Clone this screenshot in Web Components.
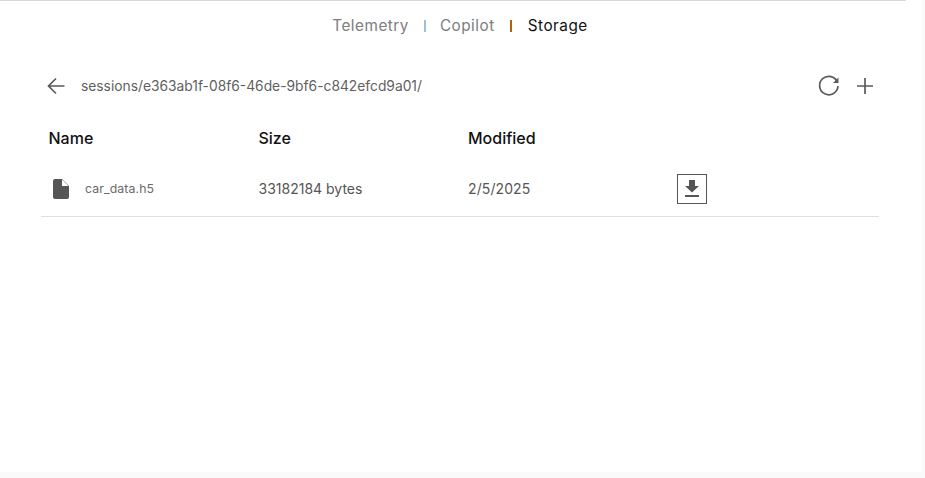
<!DOCTYPE html>
<html>
<head>
<meta charset="utf-8">
<style>
  html, body { margin: 0; height: 100%; background: #fafafa; overflow: hidden; }
  body { font-family: Inter, "Noto Sans", sans-serif; }
</style>
</head>
<body>
<storage-page></storage-page>
<script>
class TabNav extends HTMLElement {
  constructor() {
    super();
    this.attachShadow({mode: 'open'});
    this.shadowRoot.innerHTML = `
    <style>
      :host { display: flex; justify-content: center; align-items: center; height: 49px; padding-right: 2px; font-size: 15.3px; letter-spacing: .5px; color: #7d7d7d; }
      .sep { width: 2px; height: 12px; margin: 1px 14px 0 15px; background: #9dbfdc; }
      .sep.active { margin-right: 16px; background: #b5600f; }
      .on { color: #111; }
    </style>
    <span>Telemetry</span><i class="sep"></i><span>Copilot</span><i class="sep active"></i><span class="on">Storage</span>`;
  }
}
class PathBar extends HTMLElement {
  constructor() {
    super();
    this.attachShadow({mode: 'open'});
    this.shadowRoot.innerHTML = `
    <style>
      :host { display: flex; align-items: center; height: 24px; padding: 0 47px 0 45px; margin-top: 24px; font-size: 13.8px; color: #5f5f5f; }
      svg { display: block; fill: none; stroke: #5a5a5a; stroke-width: 1.7; }
      .path { flex: 1; margin-left: 14px; }
      .plus { margin-left: 14px; }
    </style>
    <svg width="22" height="22" viewBox="0 0 22 22"><path d="M19.5 11H4M11 3.5 3.5 11l7.5 7.5"/></svg>
    <span class="path"><slot></slot></span>
    <svg width="24" height="24" viewBox="0 0 24 24"><path d="M20.5 8.5A9.2 9.2 0 1 0 21 12"/><path d="M21.5 3.5v5.5H16" fill="#5a5a5a" stroke="none"/></svg>
    <svg class="plus" width="20" height="20" viewBox="0 0 20 20"><path d="M10 2v16M2 10h16"/></svg>`;
  }
}
class FileTable extends HTMLElement {
  constructor() {
    super();
    this.attachShadow({mode: 'open'});
    this.shadowRoot.innerHTML = `
    <style>
      :host { display: block; margin: 0 43px 0 41px; }
      .row { display: grid; grid-template-columns: 217.5px 209.5px 209px 1fr; align-items: center; }
      .head { height: 44px; margin-top: 18px; font-size: 16px; font-weight: 500; color: #111; }
      .head span:first-child { padding-left: 7.5px; }
      .item { height: 56px; border-bottom: 1px solid #e0e0e0; font-size: 14px; color: #555; }
      .name { display: flex; align-items: center; padding-left: 12px; font-size: 12.3px; color: #6a6a6a; letter-spacing: .1px; }
      .name svg { margin: 2px 16px 0 0; }
      .date { letter-spacing: .1px; }
      button { display: flex; align-items: center; justify-content: center; box-sizing: border-box; width: 30px; height: 30px; margin-top: 2px; padding: 0; background: none; border: 1px solid #555; }
    </style>
    <div class="row head"><span>Name</span><span>Size</span><span>Modified</span><span></span></div>
    <div class="row item">
      <span class="name">
        <svg width="16" height="20" viewBox="0 0 16 20"><path fill="#555" d="M2 0h7l7 7v11a2 2 0 0 1-2 2H2a2 2 0 0 1-2-2V2a2 2 0 0 1 2-2z"/><path fill="#fff" d="M9 0.5V7h6.5z"/></svg>
        car_data.h5
      </span>
      <span>33182184 bytes</span>
      <span class="date">2/5/2025</span>
      <span><button aria-label="Download"><svg width="16" height="18" viewBox="0 0 16 18"><path fill="#555" d="M5 0h6v6h4L8 12.5 1 6h4zM1 15h14v2H1z"/></svg></button></span>
    </div>`;
  }
}
class StoragePage extends HTMLElement {
  constructor() {
    super();
    this.attachShadow({mode: 'open'});
    this.shadowRoot.innerHTML = `
    <style>
      :host { display: block; box-sizing: border-box; width: 922px; height: 472px; background: #fff; }
      .rule { width: 906px; height: 1px; background: #d9d9d9; }
    </style>
    <div class="rule"></div>
    <tab-nav></tab-nav>
    <path-bar>sessions/e363ab1f-08f6-46de-9bf6-c842efcd9a01/</path-bar>
    <file-table></file-table>`;
  }
}
customElements.define('tab-nav', TabNav);
customElements.define('path-bar', PathBar);
customElements.define('file-table', FileTable);
customElements.define('storage-page', StoragePage);
</script>
</body>
</html>
